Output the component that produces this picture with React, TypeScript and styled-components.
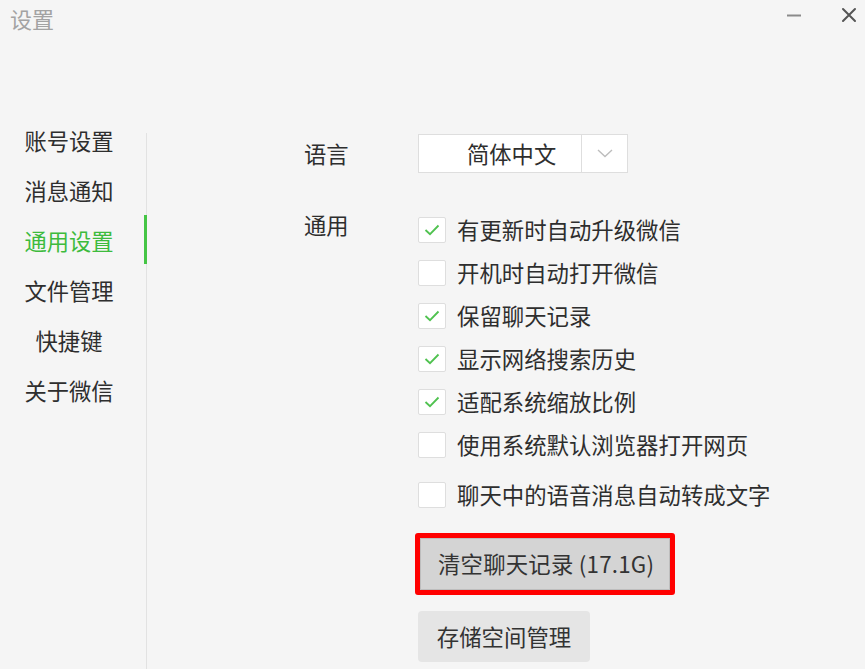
import styled, { createGlobalStyle } from 'styled-components'

const GlobalStyle = createGlobalStyle`
  html,
  body {
    margin: 0;
    padding: 0;
    background: #f5f5f5;
  }

  body {
    font-family: 'Noto Sans CJK SC', 'Noto Sans', sans-serif;
    color: #2e2e2e;
  }
`

const menu = ['账号设置', '消息通知', '通用设置', '文件管理', '快捷键', '关于微信']

const options = [
  { label: '有更新时自动升级微信', checked: true },
  { label: '开机时自动打开微信', checked: false },
  { label: '保留聊天记录', checked: true },
  { label: '显示网络搜索历史', checked: true },
  { label: '适配系统缩放比例', checked: true },
  { label: '使用系统默认浏览器打开网页', checked: false },
  { label: '聊天中的语音消息自动转成文字', checked: false },
]

const App = () => {
  return (
    <Window>
      <GlobalStyle />
      <TitleBar>
        <Title>设置</Title>
        <Controls>
          <ControlButton aria-label='minimize'>
            <svg width='16' height='16' viewBox='0 0 16 16'>
              <path d='M1 8.5h14' stroke='#8a8a8a' strokeWidth='2' />
            </svg>
          </ControlButton>
          <ControlButton aria-label='close'>
            <svg width='16' height='16' viewBox='0 0 16 16'>
              <path
                d='M2 2l12 12M14 2L2 14'
                stroke='#555'
                strokeWidth='2'
                strokeLinecap='round'
              />
            </svg>
          </ControlButton>
        </Controls>
      </TitleBar>

      <Body>
        <Sidebar>
          {menu.map((item) => (
            <NavItem key={item} active={item === '通用设置'}>
              {item}
            </NavItem>
          ))}
        </Sidebar>

        <Content>
          <Row>
            <Label>语言</Label>
            <Select>
              <SelectValue>简体中文</SelectValue>
              <SelectArrow>
                <svg width='16' height='9' viewBox='0 0 16 9'>
                  <path
                    d='M1 1l7 6.5L15 1'
                    stroke='#bdbdbd'
                    strokeWidth='1.4'
                    fill='none'
                  />
                </svg>
              </SelectArrow>
            </Select>
          </Row>

          <GeneralRow>
            <Label>通用</Label>
            <Options>
              {options.map((option, i) => (
                <Option key={option.label} last={i === options.length - 1}>
                  <Box>
                    {option.checked && (
                      <svg width='16' height='12' viewBox='0 0 16 12'>
                        <path
                          d='M1.5 6l4.5 4.2L14.5 1.5'
                          stroke='#4fc24f'
                          strokeWidth='1.8'
                          fill='none'
                        />
                      </svg>
                    )}
                  </Box>
                  <OptionText>{option.label}</OptionText>
                </Option>
              ))}

              <Highlight>
                <ClearButton>清空聊天记录 (17.1G)</ClearButton>
              </Highlight>

              <StorageButton>存储空间管理</StorageButton>
            </Options>
          </GeneralRow>
        </Content>
      </Body>
    </Window>
  )
}

const Window = styled.div`
  width: 865px;
  height: 669px;
  overflow: hidden;
  display: flex;
  flex-direction: column;
  background: #f5f5f5;
`

const TitleBar = styled.div`
  height: 40px;
  padding: 4px 0 0 10px;
  box-sizing: border-box;

  display: flex;
  flex-direction: row;
  align-items: flex-start;
  justify-content: space-between;
`

const Title = styled.div`
  font-size: 22px;
  line-height: 28px;
  color: #a3a3a3;
`

const Controls = styled.div`
  display: flex;
  flex-direction: row;
  gap: 23px;
  padding: 2px 0 0 0;
`

const ControlButton = styled.div`
  width: 32px;
  height: 18px;
  display: flex;
  align-items: center;
  justify-content: center;
`

const Body = styled.div`
  flex: 1;
  display: flex;
  flex-direction: row;
`

const Sidebar = styled.div`
  width: 148px;
  padding-top: 75px;
  flex-shrink: 0;

  display: flex;
  flex-direction: column;

  background: linear-gradient(#e2e2e2, #e2e2e2) 146px 18px / 1px 100% no-repeat;
  background-origin: content-box;
`

const NavItem = styled.div<{ active?: boolean }>`
  height: 49px;
  margin-bottom: 1px;
  padding-right: 6px;
  border-right: 3px solid ${(props) => (props.active ? '#45c545' : 'transparent')};
  box-sizing: border-box;
  margin-right: 1px;

  display: flex;
  align-items: center;
  justify-content: center;

  font-size: 22.3px;
  color: ${(props) => (props.active ? '#3dbb3d' : '#2e2e2e')};
`

const Content = styled.div`
  padding: 94px 0 0 156px;
  display: flex;
  flex-direction: column;
`

const Row = styled.div`
  display: flex;
  flex-direction: row;
  align-items: center;
`

const GeneralRow = styled.div`
  margin-top: 35px;
  display: flex;
  flex-direction: row;
  align-items: flex-start;
`

const Label = styled.div`
  width: 114px;
  flex-shrink: 0;
  font-size: 22.3px;
  line-height: 32px;
  margin-bottom: 2px;
`

const Select = styled.div`
  width: 210px;
  height: 39px;
  box-sizing: border-box;
  border: 1px solid #dedede;
  background: #fff;

  display: flex;
  flex-direction: row;
`

const SelectValue = styled.div`
  flex: 1;
  padding: 0 0 2px 48px;
  border-right: 1px solid #dedede;

  display: flex;
  align-items: center;

  font-size: 22.3px;
`

const SelectArrow = styled.div`
  width: 45px;
  display: flex;
  align-items: center;
  justify-content: center;
`

const Options = styled.div`
  display: flex;
  flex-direction: column;
  align-items: flex-start;
`

const Option = styled.div<{ last?: boolean }>`
  height: 43px;
  margin-top: ${(props) => (props.last ? '7px' : '0')};

  display: flex;
  flex-direction: row;
  align-items: center;
  gap: 11px;
`

const Box = styled.div`
  width: 28px;
  height: 26px;
  box-sizing: border-box;
  border: 1px solid #dedede;
  border-radius: 2px;
  background: #fff;

  display: flex;
  align-items: center;
  justify-content: center;
`

const OptionText = styled.span`
  font-size: 22.4px;
  line-height: 26px;
  padding-bottom: 2px;
  white-space: nowrap;
`

const Highlight = styled.div`
  margin: 17px 0 0 -3px;
  border: 5px solid #ff0000;
  border-radius: 3px;
`

const ClearButton = styled.div`
  width: 250px;
  height: 52px;
  box-sizing: border-box;
  border: 1px solid #bdbdbd;
  background: #d4d4d4;
  padding: 0 0 2px 17px;

  display: flex;
  align-items: center;

  font-size: 22.4px;
  letter-spacing: 0.2px;
  color: #333;
`

const StorageButton = styled.div`
  margin-top: 16px;
  width: 172px;
  height: 51px;
  box-sizing: border-box;
  border-radius: 4px;
  background: #e5e5e5;
  padding-bottom: 2px;

  display: flex;
  align-items: center;
  justify-content: center;

  font-size: 22.4px;
  color: #333;
`

export default App
